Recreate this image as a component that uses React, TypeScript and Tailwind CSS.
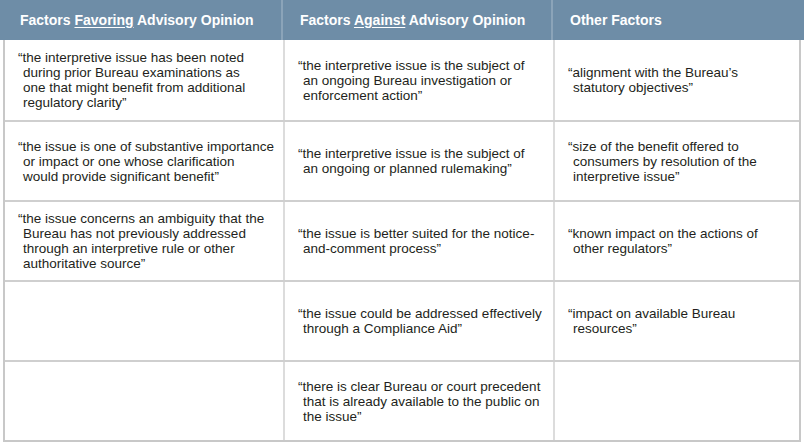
const rows: string[][][] = [
  [
    [
      'the interpretive issue has been noted',
      'during prior Bureau examinations as',
      'one that might benefit from additional',
      'regulatory clarity',
    ],
    [
      'the interpretive issue is the subject of',
      'an ongoing Bureau investigation or',
      'enforcement action',
    ],
    ['alignment with the Bureau’s', 'statutory objectives'],
  ],
  [
    [
      'the issue is one of substantive importance',
      'or impact or one whose clarification',
      'would provide significant benefit',
    ],
    ['the interpretive issue is the subject of', 'an ongoing or planned rulemaking'],
    ['size of the benefit offered to', 'consumers by resolution of the', 'interpretive issue'],
  ],
  [
    [
      'the issue concerns an ambiguity that the',
      'Bureau has not previously addressed',
      'through an interpretive rule or other',
      'authoritative source',
    ],
    ['the issue is better suited for the notice-', 'and-comment process'],
    ['known impact on the actions of', 'other regulators'],
  ],
  [
    [],
    ['the issue could be addressed effectively', 'through a Compliance Aid'],
    ['impact on available Bureau', 'resources'],
  ],
  [
    [],
    [
      'there is clear Bureau or court precedent',
      'that is already available to the public on',
      'the issue',
    ],
    [],
  ],
];

function Cell({ lines, last }: { lines: string[]; last?: boolean }) {
  return (
    <div
      className={
        'flex items-center pl-[18px] ' + (last ? '' : 'border-r-2 border-[#dcdcdc]')
      }
    >
      {lines.length > 0 && (
        <p className="indent-[-5px] whitespace-nowrap text-[13.5px] leading-[15px] text-[#231f20]">
          {lines.map((l, i) => (
            <span key={i}>
              {i === 0 && '“'}
              {l}
              {i === lines.length - 1 ? '”' : <br />}
            </span>
          ))}
        </p>
      )}
    </div>
  );
}

export default function App() {
  return (
    <div
      className="w-[804px] h-[445px] bg-white"
      style={{ fontFamily: '"Liberation Sans", Arial, sans-serif' }}
    >
      <div className="grid grid-cols-[283px_270px_1fr] h-[40px] bg-[#6e8da7] text-white font-bold text-[14px]">
        <div className="flex items-center pl-[20px] border-r-2 border-[#8ba4b9]">
          <span>
            Factors <span className="underline underline-offset-2">Favoring</span> Advisory Opinion
          </span>
        </div>
        <div className="flex items-center pl-[17px] border-r-2 border-[#8ba4b9]">
          <span>
            Factors <span className="underline underline-offset-2">Against</span> Advisory Opinion
          </span>
        </div>
        <div className="flex items-center pl-[17px]">Other Factors</div>
      </div>
      <div className="ml-[3px] w-[798px] border-x-2 border-b-2 border-[#c8c8c8]">
        {rows.map((r, i) => (
          <div
            key={i}
            className={
              'grid grid-cols-[280px_270px_1fr] h-[80px] ' +
              (i > 0 ? 'border-t-2 border-[#cfcfcf]' : '')
            }
          >
            <Cell lines={r[0]} />
            <Cell lines={r[1]} />
            <Cell lines={r[2]} last />
          </div>
        ))}
      </div>
    </div>
  );
}
